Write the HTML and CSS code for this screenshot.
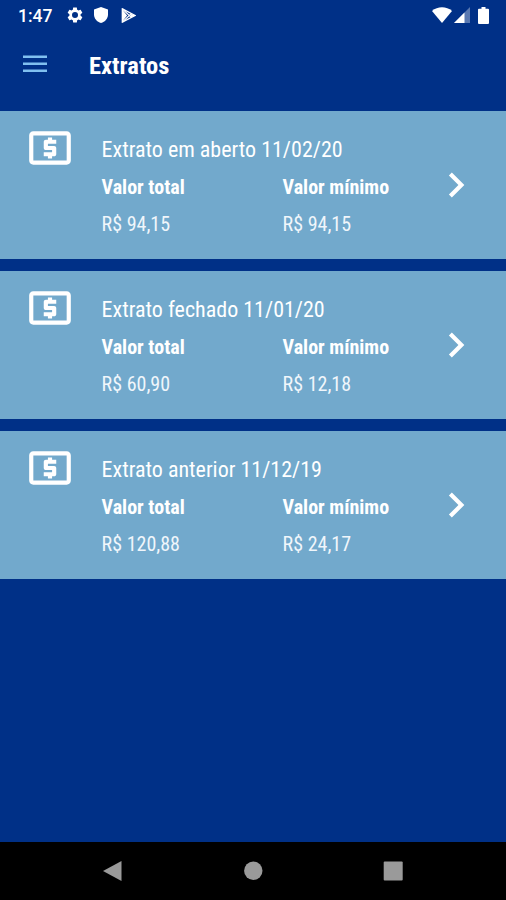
FILE: index.html
```html
<!DOCTYPE html>
<html lang="pt-BR">
<head>
<meta charset="utf-8">
<title>Extratos</title>
<link rel="stylesheet" href="styles.css">
</head>
<body>
<svg class="defs" aria-hidden="true">
  <symbol id="cash" viewBox="0 0 24 24"><path d="M11 17h2v-1h1c.55 0 1-.45 1-1v-3c0-.55-.45-1-1-1h-3v-1h4V8h-2V7h-2v1h-1c-.55 0-1 .45-1 1v3c0 .55.45 1 1 1h3v1H9v2h2v1zm9-13H4c-1.110 0-2 .89-2 2v12c0 1.110.89 2 2 2h16c1.110 0 2-.89 2-2V6c0-1.110-.89-2-2-2zm0 14H4V6h16v12z"/></symbol>
  <symbol id="chevron" viewBox="0 0 24 24"><path d="M10 6L8.590 7.410 13.170 12l-4.580 4.590L10 18l6-6z"/></symbol>
</svg>
<header class="status">
  <span class="clock">1:47</span>
  <svg class="gear" viewBox="0 0 24 24"><path d="M19.430 12.980c.04-.32.07-.64.07-.98s-.03-.66-.07-.98l2.110-1.650c.19-.15.24-.42.12-.64l-2-3.460c-.12-.22-.39-.3-.61-.22l-2.490 1c-.52-.4-1.080-.73-1.690-.98l-.38-2.650C14.460 2.180 14.250 2 14 2h-4c-.25 0-.46.18-.49.42l-.38 2.650c-.61.25-1.170.59-1.690.98l-2.490-1c-.23-.09-.49 0-.61.22l-2 3.460c-.13.22-.07.49.12.64l2.110 1.650c-.04.32-.07.65-.07.98s.03.66.07.98l-2.110 1.650c-.19.15-.24.42-.12.64l2 3.460c.12.22.39.3.61.22l2.490-1c.52.4 1.080.73 1.690.98l.38 2.650c.03.24.24.42.49.42h4c.25 0 .46-.18.49-.42l.38-2.650c.61-.25 1.170-.59 1.690-.98l2.490 1c.23.09.49 0 .61-.22l2-3.460c.12-.22.07-.49-.12-.64l-2.110-1.650zM12 16a4 4 0 1 1 0-8 4 4 0 0 1 0 8z"/></svg>
  <svg class="shield" viewBox="0 0 14 16"><path d="M7 0L14 2.600V7.500C14 11.500 11 14.900 7 16 3 14.900 0 11.500 0 7.500V2.600z"/></svg>
  <svg class="play" viewBox="0 0 16 16"><path d="M1.500 1L15 8 1.500 15z" fill="none" stroke="#fff" stroke-width="1.500"/><path d="M1.500 1L11 10M1.500 15L11 6" fill="none" stroke="#fff" stroke-width="1.400"/><path d="M1 1L6.500 8 1 15zM10 6L15.500 8 10 10z"/></svg>
  <svg class="wifi" viewBox="0 0 20 16"><path d="M10 16L0 4C5.500-1 14.500-1 20 4z"/></svg>
  <svg class="signal" viewBox="0 0 16 16"><path d="M0 16L16 0V16z" opacity=".35"/><path d="M0 16L10.500 5.500V16z"/></svg>
  <svg class="battery" viewBox="0 0 11 17"><path d="M3.500 0h4v1.700H10a1 1 0 0 1 1 1V16a1 1 0 0 1-1 1H1a1 1 0 0 1-1-1V2.700a1 1 0 0 1 1-1h2.500z"/></svg>
</header>
<div class="appbar">
  <svg class="menu" viewBox="0 0 24 18"><path d="M0 .5h24v2.500H0zM0 7.500h24v2.500H0zM0 14.500h24v2.500H0z"/></svg>
  <h1>Extratos</h1>
</div>
<main class="list">
  <section class="card">
    <svg class="cash"><use href="#cash"/></svg>
    <div class="info">
      <h2>Extrato em aberto 11/02/20</h2>
      <div class="cols">
        <div><b>Valor total</b><p>R$ 94,15</p></div>
        <div><b>Valor mínimo</b><p>R$ 94,15</p></div>
      </div>
    </div>
    <svg class="chevron"><use href="#chevron"/></svg>
  </section>
  <section class="card">
    <svg class="cash"><use href="#cash"/></svg>
    <div class="info">
      <h2>Extrato fechado 11/01/20</h2>
      <div class="cols">
        <div><b>Valor total</b><p>R$ 60,90</p></div>
        <div><b>Valor mínimo</b><p>R$ 12,18</p></div>
      </div>
    </div>
    <svg class="chevron"><use href="#chevron"/></svg>
  </section>
  <section class="card">
    <svg class="cash"><use href="#cash"/></svg>
    <div class="info">
      <h2>Extrato anterior 11/12/19</h2>
      <div class="cols">
        <div><b>Valor total</b><p>R$ 120,88</p></div>
        <div><b>Valor mínimo</b><p>R$ 24,17</p></div>
      </div>
    </div>
    <svg class="chevron"><use href="#chevron"/></svg>
  </section>
</main>
<nav class="navbar">
  <svg viewBox="0 0 20 20"><path d="M0 10L18.500 0V20z"/></svg>
  <svg viewBox="0 0 20 20"><circle cx="10.300" cy="9.800" r="9.200"/></svg>
  <svg viewBox="0 0 20 20"><rect x=".7" y=".5" width="19" height="19" rx="1"/></svg>
</nav>
</body>
</html>
```
FILE: styles.css
```css
* { box-sizing: border-box; margin: 0; padding: 0; }
body {
  width: 506px;
  height: 900px;
  overflow: hidden;
  display: flex;
  flex-direction: column;
  background: #003087;
  color: #fff;
  font-family: "Roboto Condensed", Roboto, sans-serif;
  font-stretch: 75%;
}
svg { display: block; fill: #fff; flex: none; }
.defs { display: none; }
.status { height: 32px; display: flex; align-items: center; padding: 0 17px 2px 18px; }
.clock { font: 500 17.500px/32px Roboto, sans-serif; font-stretch: 100%; width: 47.500px; padding-top: 1px; }
.gear { width: 18px; height: 18px; }
.shield { width: 14px; height: 16px; margin-left: 10.500px; }
.play { width: 15px; height: 15px; margin-left: 13px; }
.wifi { width: 20px; height: 16px; margin-left: auto; }
.signal { width: 16px; height: 16px; margin-left: 2px; }
.battery { width: 11px; height: 17px; margin-left: 8px; }
.appbar { height: 79px; display: flex; padding: 23px 0 0 23px; }
.menu { width: 24px; height: 18px; fill: #80c0f0; }
.appbar h1 { font-size: 24.500px; font-weight: 700; line-height: 28px; margin: -3px 0 0 42px; }
.list { flex: 1; display: flex; flex-direction: column; gap: 12px; }
.card { height: 148px; display: flex; background: #72a9cc; }
.cash { width: 50px; height: 50px; margin: 12px 26.300px 0 25.300px; }
.info { width: 341px; padding-top: 25px; white-space: nowrap; }
.info h2 { font-size: 22px; line-height: 28px; font-weight: 400; }
.cols { display: grid; grid-template-columns: 181px 1fr; font-size: 20px; }
.cols b { display: block; line-height: 24px; margin-top: 11px; }
.cols p { line-height: 24px; margin-top: 12.500px; color: #f0f6fb; }
.chevron { width: 50px; height: 50px; margin: 49px 0 0 -12px; }
.navbar { height: 58px; background: #000; display: flex; gap: 120px; padding: 19px 0 0 103px; }
.navbar svg { width: 20px; height: 20px; fill: #9a9a9a; }
```
